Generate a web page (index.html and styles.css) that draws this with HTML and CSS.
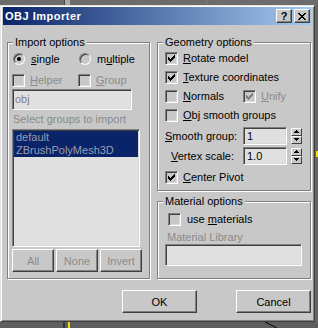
FILE: index.html
```html
<!DOCTYPE html>
<html>
<head>
<meta charset="utf-8">
<title>OBJ Importer</title>
<link rel="stylesheet" href="styles.css">
</head>
<body>
<div class="screen">
  <svg class="strip-top" width="318" height="5" viewBox="0 0 318 5">
    <rect width="318" height="5" fill="#6c6c6c"/>
    <rect x="64" width="1" height="5" fill="#4a4a4a"/>
    <rect x="65" width="5" height="5" fill="#a8a8a8"/>
    <rect x="206" width="1" height="5" fill="#7c7c7c"/>
  </svg>
  <div class="middle">
    <div class="window">
      <div class="titlebar">
        <span class="title">OBJ Importer</span>
        <div class="caption-buttons">
          <button class="cap-btn cap-help">?</button>
          <button class="cap-btn">
            <svg width="8" height="7" viewBox="0 0 8 7"><path fill="#000" d="M0 0h2v1h-2z M6 0h2v1h-2z M1 1h2v1h-2z M5 1h2v1h-2z M2 2h4v1h-4z M3 3h2v1h-2z M2 4h4v1h-4z M1 5h2v1h-2z M5 5h2v1h-2z M0 6h2v1h-2z M6 6h2v1h-2z"/></svg>
          </button>
        </div>
      </div>
      <div class="client">
        <div class="panels">
          <fieldset class="group group-import">
            <legend>Import options</legend>
            <div class="radio-row">
              <label class="opt opt-first"><span class="radio"><span class="dot"></span></span><span><u>s</u>ingle</span></label>
              <label class="opt"><span class="radio"></span><span>m<u>u</u>ltiple</span></label>
            </div>
            <div class="cb-row import-checks">
              <label class="opt opt-first dim"><span class="cb"></span><span><u>H</u>elper</span></label>
              <label class="opt dim"><span class="cb"></span><span><u>G</u>roup</span></label>
            </div>
            <div class="field obj-field dim">obj</div>
            <div class="caption dim">Select groups to import</div>
            <div class="listbox">
              <div class="item">default</div>
              <div class="item">ZBrushPolyMesh3D</div>
            </div>
            <div class="btn-row">
              <button class="btn btn-small dim">All</button>
              <button class="btn btn-small dim">None</button>
              <button class="btn btn-small dim">Invert</button>
            </div>
          </fieldset>
          <div class="right-col">
            <fieldset class="group group-geom">
              <legend>Geometry options</legend>
              <div class="cb-row geom-row first">
                <label class="opt"><span class="cb"><svg width="9" height="9" viewBox="0 0 9 9"><path fill="#000" d="M1 3h1v1h1v1h1v-1h1v-1h1v-1h1v-1h1v3h-1v1h-1v1h-1v1h-1v1h-1v-1h-1v-1h-1z"/></svg></span><span><u>R</u>otate model</span></label>
              </div>
              <div class="cb-row geom-row">
                <label class="opt"><span class="cb"><svg width="9" height="9" viewBox="0 0 9 9"><path fill="#000" d="M1 3h1v1h1v1h1v-1h1v-1h1v-1h1v-1h1v3h-1v1h-1v1h-1v1h-1v1h-1v-1h-1v-1h-1z"/></svg></span><span><u>T</u>exture coordinates</span></label>
              </div>
              <div class="cb-row geom-row">
                <label class="opt opt-normals"><span class="cb"></span><span><u>N</u>ormals</span></label>
                <label class="opt dim"><span class="cb"><svg width="9" height="9" viewBox="0 0 9 9"><path fill="#808080" d="M1 3h1v1h1v1h1v-1h1v-1h1v-1h1v-1h1v3h-1v1h-1v1h-1v1h-1v1h-1v-1h-1v-1h-1z"/></svg></span><span><u>U</u>nify</span></label>
              </div>
              <div class="cb-row geom-row">
                <label class="opt"><span class="cb"></span><span><u>O</u>bj smooth groups</span></label>
              </div>
              <div class="spin-row smooth">
                <span class="spin-label"><u>S</u>mooth group:</span>
                <span class="field spin-field">1</span>
                <span class="spinner">
                  <span class="spin-btn"><svg width="9" height="6" viewBox="0 0 9 6"><path fill="#000" d="M4 1h1v1h1v1h1v1h-5v-1h1v-1h1z"/></svg></span>
                  <span class="spin-btn"><svg width="9" height="6" viewBox="0 0 9 6"><path fill="#000" d="M2 1h5v1h-1v1h-1v1h-1v-1h-1v-1h-1z"/></svg></span>
                </span>
              </div>
              <div class="spin-row vertex">
                <span class="spin-label"><u>V</u>ertex scale:</span>
                <span class="field spin-field">1.0</span>
                <span class="spinner">
                  <span class="spin-btn"><svg width="9" height="6" viewBox="0 0 9 6"><path fill="#000" d="M4 1h1v1h1v1h1v1h-5v-1h1v-1h1z"/></svg></span>
                  <span class="spin-btn"><svg width="9" height="6" viewBox="0 0 9 6"><path fill="#000" d="M2 1h5v1h-1v1h-1v1h-1v-1h-1v-1h-1z"/></svg></span>
                </span>
              </div>
              <div class="cb-row geom-row pivot">
                <label class="opt"><span class="cb"><svg width="9" height="9" viewBox="0 0 9 9"><path fill="#000" d="M1 3h1v1h1v1h1v-1h1v-1h1v-1h1v-1h1v3h-1v1h-1v1h-1v1h-1v1h-1v-1h-1v-1h-1z"/></svg></span><span><u>C</u>enter Pivot</span></label>
              </div>
            </fieldset>
            <fieldset class="group group-mat">
              <legend>Material options</legend>
              <div class="cb-row mat-row">
                <label class="opt opt-mat"><span class="cb"></span><span>use <u>m</u>aterials</span></label>
              </div>
              <div class="caption mat-caption dim">Material Library</div>
              <div class="field mat-field"></div>
            </fieldset>
          </div>
        </div>
        <div class="footer">
          <button class="btn btn-wide">OK</button>
          <button class="btn btn-wide">Cancel</button>
        </div>
      </div>
    </div>
    <svg class="strip-right" width="3" height="317" viewBox="0 0 3 317">
      <rect width="3" height="317" fill="#666"/>
      <rect x="1" y="146" width="2" height="6" fill="#f2e200"/>
    </svg>
  </div>
  <svg class="strip-bottom" width="318" height="6" viewBox="0 0 318 6">
    <rect width="318" height="6" fill="#5e5e5e"/>
    <rect x="63" width="2" height="6" fill="#2e3444"/>
    <rect x="68" width="2" height="6" fill="#f2e200"/>
    <path d="M265 0 L277 6" stroke="#000" stroke-width="1"/>
  </svg>
</div>
</body>
</html>
```

FILE: styles.css
```css
* { box-sizing: border-box; }

html, body { margin: 0; padding: 0; }

body {
  width: 318px;
  height: 328px;
  overflow: hidden;
  background: #666;
  font-family: "Liberation Sans", Arial, sans-serif;
  font-size: 11px;
  line-height: 13px;
  color: #000;
}

.screen { display: flex; flex-direction: column; }
.strip-top, .strip-right, .strip-bottom { display: block; flex: none; }

.middle { display: flex; height: 317px; }

.window {
  width: 315px;
  height: 317px;
  flex: none;
  display: flex;
  flex-direction: column;
  background: #c8c8c8;
  border: 1px solid;
  border-color: #e4e4e4 #404040 #404040 #e4e4e4;
  box-shadow: inset 1px 1px #fff, inset -1px -1px #808080;
  padding: 1px 2px 2px;
}

/* title bar */
.titlebar {
  height: 18px;
  flex: none;
  display: flex;
  align-items: center;
  justify-content: space-between;
  padding: 0 2px;
  background: linear-gradient(to right, #0a246a, #a6caf0);
}
.title {
  color: #fff;
  font-weight: bold;
  font-size: 11px;
  letter-spacing: 0.5px;
}
.caption-buttons { display: flex; gap: 2px; }
.cap-btn {
  width: 16px;
  height: 14px;
  margin: 0;
  padding: 0;
  display: flex;
  align-items: center;
  justify-content: center;
  background: #c8c8c8;
  border: 1px solid;
  border-color: #fff #404040 #404040 #fff;
  box-shadow: inset -1px -1px #808080;
  border-radius: 0;
  font-family: "Liberation Sans", Arial, sans-serif;
  font-size: 11px;
  font-weight: bold;
  color: #000;
  line-height: 12px;
}

/* client */
.client { flex: 1; display: flex; flex-direction: column; }

.panels {
  display: grid;
  grid-template-columns: 143px 154px;
  column-gap: 7px;
  align-items: start;
  padding: 11px 0 0 4px;
}

.group {
  margin: 0;
  padding: 0;
  min-width: 0;
  border: 1px solid #808080;
  box-shadow: 1px 1px 0 #fff, inset 1px 1px 0 #fff;
}
.group legend {
  padding: 0 2px;
  margin-left: 5px;
  background: #c8c8c8;
  line-height: 13px;
}

.group-import { height: 243px; }
.right-col { display: flex; flex-direction: column; }
.group-geom { height: 155px; }
.group-mat { height: 84px; margin-top: 4px; }

.dim { color: #8a8a8a; }

.opt { display: flex; align-items: center; gap: 5px; white-space: nowrap; }

/* radios */
.radio-row {
  display: flex;
  align-items: center;
  height: 14px;
  margin-top: 3px;
  padding-left: 5px;
}
.radio-row .opt { gap: 6px; }
.opt-first { width: 66px; flex: none; }
.radio {
  width: 12px;
  height: 12px;
  flex: none;
  border-radius: 50%;
  border: 1px solid;
  border-color: #808080 #fff #fff #808080;
  box-shadow: inset 1px 1px #404040;
  background: #c8c8c8;
  display: flex;
  align-items: center;
  justify-content: center;
}
.dot { width: 4px; height: 4px; border-radius: 50%; background: #000; }

/* checkboxes */
.cb-row { display: flex; align-items: center; height: 13px; }
.cb {
  width: 13px;
  height: 13px;
  flex: none;
  padding: 1px;
  border: 1px solid;
  border-color: #808080 #fff #fff #808080;
  box-shadow: inset 1px 1px #404040, inset -1px -1px #d8d8d8;
  background: #c8c8c8;
}
.cb svg { display: block; }

.import-checks { margin-top: 8px; padding-left: 4px; }

/* sunken fields */
.field {
  border: 1px solid;
  border-color: #808080 #fff #fff #808080;
  box-shadow: inset 1px 1px #404040, inset -1px -1px #d8d8d8;
  background: #e0e0e0;
}
.obj-field {
  width: 120px;
  height: 21px;
  margin: 2px 0 0 4px;
  padding: 3px 0 0 2px;
  color: #808080;
}

.caption { margin: 3px 0 0 5px; }

.listbox {
  width: 128px;
  height: 118px;
  margin: 3px 0 0 4px;
  padding: 1px;
  border: 1px solid;
  border-color: #808080 #fff #fff #808080;
  box-shadow: inset 1px 1px #404040, inset -1px -1px #d8d8d8;
  background: #e0e0e0;
}
.item {
  height: 13px;
  line-height: 13px;
  padding-left: 2px;
  background: #0a246a;
  color: #9a9cae;
  white-space: nowrap;
}

/* buttons */
.btn {
  margin: 0;
  padding: 0;
  border-radius: 0;
  font-family: "Liberation Sans", Arial, sans-serif;
  font-size: 11px;
  color: #000;
  background: #c8c8c8;
  border: 1px solid;
  border-color: #fff #404040 #404040 #fff;
  box-shadow: inset -1px -1px #808080;
}
.btn.dim { color: #8a8a8a; }
.btn-row { display: flex; gap: 2px; margin: 2px 0 0 4px; }
.btn-small { width: 42px; height: 23px; }

/* geometry */
.geom-row { padding-left: 7px; margin-top: 6px; }
.geom-row.first { margin-top: 3px; }
.opt-normals { width: 78px; flex: none; }
.pivot { margin-top: 6px; }

.spin-row {
  display: flex;
  align-items: center;
  height: 18px;
  padding-left: 7px;
}
.spin-row.smooth { margin-top: 5px; }
.spin-row.vertex { margin-top: 2px; }
.spin-label {
  width: 72px;
  flex: none;
  text-align: right;
  padding-right: 3px;
  white-space: nowrap;
}
.spin-field {
  width: 44px;
  height: 18px;
  margin-left: 6px;
  padding: 2px 0 0 3px;
}
.spinner { display: flex; flex-direction: column; margin-left: 4px; }
.spin-btn {
  width: 11px;
  height: 8px;
  background: #c8c8c8;
  border: 1px solid;
  border-color: #fff #404040 #404040 #fff;
}
.spin-btn svg { display: block; }

/* material */
.mat-row { margin-top: 5px; padding-left: 10px; }
.opt-mat { gap: 6px; }
.mat-caption { margin: 5px 0 0 9px; }
.mat-field { width: 137px; height: 22px; margin-left: 7px; }

/* footer */
.footer {
  display: flex;
  justify-content: flex-end;
  gap: 39px;
  padding-right: 1px;
  margin-top: 11px;
}
.btn-wide { width: 75px; height: 23px; }
```
